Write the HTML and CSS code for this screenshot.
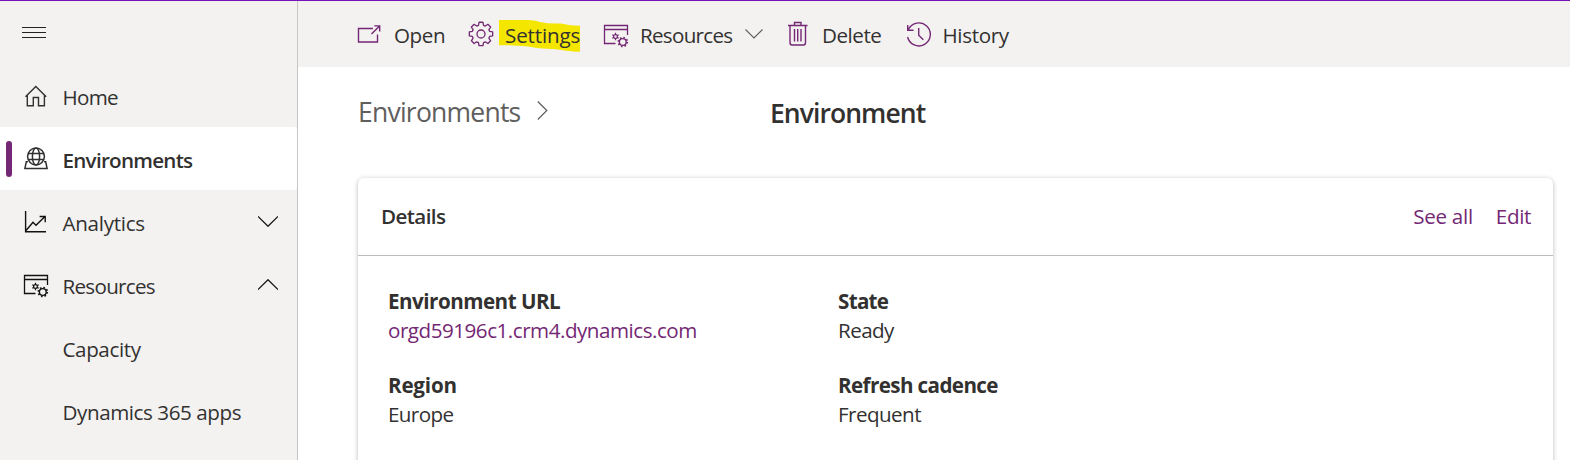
FILE: index.html
```html
<!DOCTYPE html>
<html lang="en">
<head>
<meta charset="utf-8">
<title>Environment</title>
<link rel="stylesheet" href="styles.css">
</head>
<body>
<svg class="defs" width="0" height="0">
  <symbol id="resources" viewBox="0 0 26 26">
    <path d="M12.5 20.5H1.5V2.5h23v9.500M1.500 6.500h23" fill="none" stroke="currentColor" stroke-width="1.3"/>
    <path d="M12.500 9.800v7.400M9.300 11.650l6.400 3.700M15.700 11.650l-6.400 3.700" fill="none" stroke="currentColor" stroke-width="1.2"/>
    <circle cx="12.500" cy="13.500" r="1.900" fill="#f3f2f1" stroke="currentColor" stroke-width="1.200"/>
    <circle cx="19.800" cy="19" r="4.500" fill="none" stroke="currentColor" stroke-width="1.700" stroke-dasharray="1.600 1.934"/>
    <circle cx="19.800" cy="19" r="3.400" fill="#f3f2f1" stroke="currentColor" stroke-width="1.400"/>
  </symbol>
</svg>
<div class="app">
  <nav class="sidebar">
    <div class="menu"><svg width="24" height="12"><path d="M0 .5h24M0 5.500h24M0 10.500h24" stroke="#222" fill="none"/></svg></div>
    <div class="item">
      <svg class="icon" viewBox="0 0 26 26"><path d="M2.500 12.700 12.800 2.500 23.200 12.700M4.300 11v10.700h6v-8.200h5.200v8.200h5.900V11" fill="none" stroke="#323130" stroke-width="1.400"/></svg>
      <span class="t home">Home</span>
    </div>
    <div class="item active">
      <svg class="icon" viewBox="0 0 26 26"><g fill="none" stroke="#323130" stroke-width="1.500"><circle cx="13" cy="9.500" r="8.400"/><ellipse cx="13" cy="9.500" rx="3.600" ry="8.400"/><path d="M5.500 6.500h15M5.500 12.600h15M4.900 14.800H3.300L1.900 21.500h22.200l-1.400-6.700h-1.600"/></g></svg>
      <span class="t envs">Environments</span>
    </div>
    <div class="item">
      <svg class="icon" viewBox="0 0 26 26"><path d="M2.600 1v20.800H23M3 20.500l7-8.200 3 2.900 8.700-8.500M16.600 6.500h5.600v5.800" fill="none" stroke="#111" stroke-width="1.400"/></svg>
      <span class="t analytics">Analytics</span>
      <svg class="chev" viewBox="0 0 20 11"><path d="M0 .5l10 9.800L20 .5" fill="none" stroke="#111" stroke-width="1.200"/></svg>
    </div>
    <div class="item">
      <svg class="icon dark"><use href="#resources"/></svg>
      <span class="t nres">Resources</span>
      <svg class="chev" viewBox="0 0 20 11"><path d="M0 10.500L10 .7l10 9.800" fill="none" stroke="#111" stroke-width="1.200"/></svg>
    </div>
    <div class="item sub"><span class="t capacity">Capacity</span></div>
    <div class="item sub"><span class="t dyn">Dynamics 365 apps</span></div>
  </nav>
  <main class="main">
    <header class="commands">
      <div class="cmd open">
        <svg class="icon" viewBox="0 0 26 26"><path d="M16 5.500H1.500v13.500H20.500v-7.500M14.500 11.100l7.800-7.800M17.300 2.900h5.400v5.500" fill="none" stroke="currentColor" stroke-width="1.400"/></svg>
        <span class="t topen">Open</span>
      </div>
      <div class="cmd settings">
        <svg class="icon" viewBox="0 0 26 26"><path d="M11.050 1.260h3.900l.6 3.050 1.740.73 2.590-1.740 2.740 2.740-1.740 2.590.73 1.740 3.050.6v3.900l-3.050.6-.73 1.740 1.740 2.590-2.740 2.740-2.590-1.740-1.740.73-.6 3.050h-3.900l-.6-3.050-1.740-.73-2.590 1.740-2.740-2.740 1.740-2.590-.73-1.740-3.050-.6v-3.900l3.050-.6.73-1.740-1.740-2.590 2.740-2.740 2.590 1.740 1.740-.73z" stroke-linejoin="round" fill="none" stroke="currentColor" stroke-width="1.300"/><circle cx="13" cy="13" r="4" fill="none" stroke="currentColor" stroke-width="1.300"/></svg>
        <div class="mark"><svg class="ink" viewBox="0 0 81 32"><path d="M0 0H28Q36 0 41 2Q50 4 62 3.500Q71 5.800 81 5.800V31.500Q73 32 66 30.500Q56 28.500 47 28.700Q38 28.500 29 26.500Q15 25 0 25.300z" fill="#f5e600"/></svg><span class="t tset">Settings</span></div>
      </div>
      <div class="cmd res">
        <svg class="icon"><use href="#resources"/></svg>
        <span class="t tres">Resources</span>
        <svg class="down" viewBox="0 0 18 10"><path d="M.5.5 9 9 17.500.5" fill="none" stroke="#605e5c" stroke-width="1.100"/></svg>
      </div>
      <div class="cmd del">
        <svg class="icon" viewBox="0 0 26 26"><path d="M3 4.500h19.500M9.500 4.500V1.500h6.500v3M5 4.500v17q0 2.500 2 2.500h11.500q2 0 2-2.500v-17M9.500 8v12.500M12.700 8v12.500M16 8v12.500" fill="none" stroke="currentColor" stroke-width="1.400"/></svg>
        <span class="t tdel">Delete</span>
      </div>
      <div class="cmd hist">
        <svg class="icon" viewBox="0 0 26 26"><path d="M1.600 16A11.500 11.500 0 1 0 2.500 8.300M1.700 4v5.300h5.800M12.700 7v7.200l4.600 4.600" fill="none" stroke="currentColor" stroke-width="1.400"/></svg>
        <span class="t this">History</span>
      </div>
    </header>
    <div class="crumbs">
      <span class="t crumb">Environments</span>
      <svg class="right" viewBox="0 0 11 19"><path d="M.8.5 9.800 9.500.8 18.500" fill="none" stroke="#605e5c" stroke-width="1.200"/></svg>
      <span class="t title">Environment</span>
    </div>
    <section class="card">
      <div class="cardhead">
        <span class="t details">Details</span>
        <a class="t seeall">See all</a>
        <a class="t edit">Edit</a>
      </div>
      <div class="grid">
        <div class="field"><b class="t lurl">Environment URL</b><a class="t vurl">orgd59196c1.crm4.dynamics.com</a></div>
        <div class="field"><b class="t lstate">State</b><span class="t vstate">Ready</span></div>
        <div class="field"><b class="t lreg">Region</b><span class="t vreg">Europe</span></div>
        <div class="field"><b class="t lref">Refresh cadence</b><span class="t vref">Frequent</span></div>
      </div>
    </section>
  </main>
</div>
</body>
</html>
```
FILE: styles.css
```css
* { box-sizing: border-box; }
body { margin: 0; background: #fff; color: #323130; font: 20.6px/30px "Open Sans", "Noto Sans", sans-serif; }
.defs { position: absolute; }
.app { display: flex; height: 460px; overflow: hidden; border-top: 1px solid #7512b8; }
.t { white-space: nowrap; }
.icon { width: 26px; height: 26px; flex: none; }
.sidebar { width: 298px; flex: none; background: #f3f2f1; border-right: 1px solid #c8c6c4; }
.menu { height: 63px; padding: 26px 0 0 22px; }
.menu svg { display: block; }
.item { display: flex; align-items: center; height: 63px; padding: 0 19px 0 22.5px; }
.item .icon { margin-top: 3px; }
.item .t { margin: 3px 0 0 14px; }
.item .chev { width: 20px; height: 11px; margin: 0 0 1px auto; }
.item.sub { padding-left: 48.5px; }
.dark { color: #111; }
.item.active { background: #fff; border-radius: 0 3px 3px 0; padding-left: 6px; font-weight: 600; }
.active::before { content: ""; width: 6px; height: 36px; border-radius: 3px; background: #742774; margin-right: 10.5px; }
.main { flex: 1; min-width: 0; }
.commands { display: flex; height: 66px; padding: 0 0 0 59px; background: #f3f2f1; }
.cmd { display: flex; align-items: center; color: #742774; }
.cmd .t { color: #323130; margin: 1px 0 0 11px; }
.open { width: 111px; }
.open .icon { margin-top: 3px; }
.settings { width: 135px; }
.res { width: 182px; }
.res .icon { margin-top: 3px; }
.del { width: 120.5px; }
.mark { position: relative; height: 30px; margin-top: 1px; }
.ink { position: absolute; left: 4.500px; top: 0; width: 81px; height: 32px; }
.mark .t { position: relative; display: block; margin-top: 0; }
.down { width: 18px; height: 10px; margin-left: 12.500px; }
.crumbs { display: flex; height: 111px; padding: 29px 0 0 60px; font-size: 26.5px; line-height: 32px; }
.crumb { color: #605e5c; width: 162px; flex: none; }
.right { width: 11px; height: 19px; margin: 5px 0 0 16.500px; flex: none; }
.title { margin: 1px 0 0 222.500px; font-weight: 600; }
.card { width: 1195px; height: 400px; margin-left: 60px; border-radius: 6px; background: #fff; box-shadow: 0 1px 5px rgba(0,0,0,.28); }
.cardhead { display: flex; align-items: center; height: 78px; padding: 0 22px 2px 23px; border-bottom: 1px solid #bebbb8; }
.details { font-weight: 600; margin-right: auto; }
a { color: #742774; }
.edit { margin-left: 23px; }
.grid { display: grid; grid-template-columns: 450px 1fr; padding: 31px 30px; row-gap: 26px; }
.field { display: flex; flex-direction: column; align-items: flex-start; line-height: 29px; }

/* per-label tracking */
.home { letter-spacing: -.7px; }
.envs { letter-spacing: -.73px; }
.analytics { letter-spacing: -.28px; }
.nres, .tres { letter-spacing: -.7px; }
.capacity { letter-spacing: -.38px; }
.dyn { letter-spacing: -.42px; }
.topen { letter-spacing: -.4px; }
.tset { letter-spacing: -.15px; }
.tdel { letter-spacing: -.45px; }
.this { letter-spacing: -.33px; }
.crumb { letter-spacing: -.77px; }
.title { letter-spacing: -.93px; }
.details { letter-spacing: -.6px; }
.seeall { letter-spacing: -.3px; }
.edit { letter-spacing: -.35px; }
.lurl { letter-spacing: -.5px; }
.vurl { letter-spacing: -.48px; }
.lstate { letter-spacing: -.7px; }
.vstate { letter-spacing: -.55px; }
.lreg { letter-spacing: -.2px; }
.vreg { letter-spacing: -.6px; }
.lref { letter-spacing: -.6px; }
.vref { letter-spacing: -.55px; }
```
